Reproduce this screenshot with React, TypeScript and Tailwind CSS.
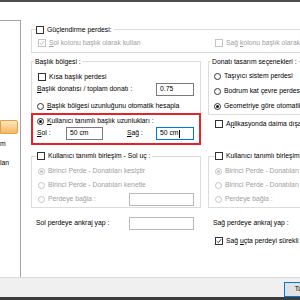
import clsx from 'clsx';
import type { ReactNode } from 'react';

function Check({ checked = false, disabled = false }: { checked?: boolean; disabled?: boolean }) {
  return (
    <span
      className={clsx(
        'flex h-[8px] w-[8px] shrink-0 items-center justify-center border bg-white',
        disabled ? 'border-[#c4c4c4]' : 'border-[#333333]'
      )}
    >
      {checked && (
        <svg viewBox="0 0 6 6" className="h-[6px] w-[6px]">
          <path d="M0.7 3.1 2.3 4.7 5.3 1.1" fill="none" stroke={disabled ? '#b8b8b8' : '#333333'} strokeWidth="0.9" />
        </svg>
      )}
    </span>
  );
}

function Radio({ checked = false, disabled = false }: { checked?: boolean; disabled?: boolean }) {
  return (
    <span
      className={clsx(
        'flex h-[7px] w-[7px] shrink-0 items-center justify-center rounded-full border bg-white',
        disabled ? 'border-[#c4c4c4]' : 'border-[#333333]'
      )}
    >
      {checked && <span className={clsx('h-[3px] w-[3px] rounded-full', disabled ? 'bg-[#c4c4c4]' : 'bg-[#111111]')} />}
    </span>
  );
}

function Field({ value = '', width, focused, disabled }: { value?: string; width: string; focused?: boolean; disabled?: boolean }) {
  return (
    <div
      className={clsx(
        'flex h-[13px] shrink-0 items-center border bg-white pl-[3px]',
        width,
        focused ? 'border-[#0078d7]' : disabled ? 'border-[#b9b9b9]' : 'border-[#7a7a7a]'
      )}
    >
      {value}
      {focused && <span className="ml-[0.5px] h-[8px] w-[1px] bg-black" />}
    </div>
  );
}

// checkbox / radio with its caption
function Opt({ children, className, muted }: { children: ReactNode; className?: string; muted?: boolean }) {
  return <div className={clsx('flex items-center gap-[3px] whitespace-nowrap', muted && 'text-[#a0a0a0]', className)}>{children}</div>;
}

function U({ children }: { children: ReactNode }) {
  return <span className="underline decoration-[0.6px] underline-offset-[1px]">{children}</span>;
}

function JoinGroup({ side }: { side: 'Sol' | 'Sağ' }) {
  return (
    <div className="mt-[11px] border border-[#dcdcdc] pb-[1px]">
      <Opt className={clsx('-mt-[5px] h-[8px] w-fit bg-white pr-[2px]', side === 'Sol' ? 'ml-[5px]' : 'ml-[6px]')}>
        <Check />
        <span>Kullanıcı tanımlı birleşim - {side} uç :</span>
      </Opt>
      <div className="mt-[4px] flex flex-col pl-[6px]">
        <Opt muted className="h-[14px]">
          <Radio checked disabled />
          <span>Birinci Perde - Donatıları kesiştir</span>
        </Opt>
        <Opt muted className="h-[14px]">
          <Radio disabled />
          <span>Birinci Perde - Donatıları kenetle</span>
        </Opt>
        <div className="flex h-[14px] items-center justify-between pr-[6px]">
          <Opt muted>
            <Radio disabled />
            <span>Perdeye bağla :</span>
          </Opt>
          <Field width="w-[65px]" disabled />
        </div>
      </div>
    </div>
  );
}

export default function App() {
  return (
    <div className="flex h-[300px] w-[300px] flex-col overflow-hidden bg-white font-['Liberation_Sans',Arial,sans-serif] text-[6.8px] leading-none text-black">
      <div className="h-[2px] shrink-0 bg-[#4d4d4d]" />

      <div className="flex h-[275px] shrink-0 overflow-hidden">
        {/* tree list on the left, scrolled sideways */}
        <aside className="mt-[18px] w-[21px] shrink-0 overflow-hidden border-t border-r border-[#a3a3a3]">
          <div className="mt-[99px] h-[14px] w-[18px] rounded-r-[2px] border border-[#e3a04a] bg-gradient-to-b from-[#fde6bd] to-[#f6b860]" />
          <div className="mt-[3px] flex h-[14px] items-center">m</div>
          <div className="mt-[5px] flex h-[14px] items-center">lan</div>
        </aside>

        <main className="flex w-[400px] shrink-0 flex-col pl-[10px]">
          <div className="mt-[27px] w-[347px] border border-[#dcdcdc] pb-[5px]">
            <Opt className="-mt-[4px] ml-[4px] h-[8px] w-fit bg-white pr-[2px]">
              <Check />
              <span>Güçlendirme perdesi:</span>
            </Opt>
            <div className="mt-[5px] flex h-[8px]">
              <Opt muted className="w-[168px] pl-[6px]">
                <Check checked disabled />
                <span>
                  <U>S</U>ol kolonu başlık olarak kullan
                </span>
              </Opt>
              <Opt muted className="pl-[15px]">
                <Check disabled />
                <span>
                  Sağ <U>k</U>olonu başlık olarak kullan
                </span>
              </Opt>
            </div>
          </div>

          <div className="mt-[8px] flex gap-[7px]">
            {/* left column */}
            <div className="flex w-[170px] shrink-0 flex-col">
              <div className="border border-[#dcdcdc]">
                <div className="-mt-[4px] ml-[2px] flex h-[8px] w-fit items-center bg-white px-[1px]">Başlık bölgesi :</div>
                <Opt className="mt-[7px] h-[8px] pl-[6px]">
                  <Check />
                  <span>Kısa başlık perdesi</span>
                </Opt>
                <div className="mt-[2px] flex h-[13px] items-center justify-between pl-[5px] pr-[6px]">
                  <span>
                    <U>B</U>aşlık donatısı / toplam donatı :
                  </span>
                  <Field value="0.75" width="w-[38px]" />
                </div>
                <Opt className="mt-[6px] h-[8px] pl-[5px]">
                  <Radio />
                  <span>
                    <U>B</U>aşlık bölgesi uzunluğunu otomatik hesapla
                  </span>
                </Opt>
                <div className="-mx-[1px] mt-[3px] -mb-[1px] border-2 border-[#e3242b] pb-[3px]">
                  <Opt className="mt-[2px] h-[8px] pl-[4px]">
                    <Radio checked />
                    <span>
                      <U>K</U>ullanıcı tanımlı başlık uzunlukları :
                    </span>
                  </Opt>
                  <div className="mt-[2px] flex h-[13px] items-center pl-[4px]">
                    <span className="w-[29px]">
                      <U>S</U>ol :
                    </span>
                    <Field value="50 cm" width="w-[37px]" />
                    <span className="ml-[24px] w-[29px]">
                      <U>S</U>ağ :
                    </span>
                    <Field value="50 cm" width="w-[38px]" focused />
                  </div>
                </div>
              </div>

              <JoinGroup side="Sol" />

              <div className="mt-[9px] flex h-[13px] items-center justify-between pl-[5px] pr-[7px]">
                <span>Sol perdeye ankraj yap :</span>
                <Field width="w-[65px]" disabled />
              </div>
            </div>

            {/* right column */}
            <div className="flex w-[170px] shrink-0 flex-col">
              <div className="border border-[#dcdcdc]">
                <div className="-mt-[4px] ml-[2px] flex h-[8px] w-fit items-center bg-white px-[1px]">Donatı tasarım seçenekleri :</div>
                <div className="mt-[3px] flex flex-col pl-[5px]">
                  <Opt className="h-[15px]">
                    <Radio />
                    <span>Taşıyıcı sistem perdesi</span>
                  </Opt>
                  <Opt className="h-[15px]">
                    <Radio />
                    <span>Bodrum kat çevre perdesi</span>
                  </Opt>
                  <Opt className="h-[15px]">
                    <Radio checked />
                    <span>Geometriye göre otomatik belirle</span>
                  </Opt>
                </div>
              </div>
              <Opt className="mt-[5px] h-[8px] pl-[7px]">
                <Check />
                <span>
                  A<U>p</U>likasyonda daima dışarıda göster
                </span>
              </Opt>

              <div className="-mt-[11px] pt-[28px]">
                <JoinGroup side="Sağ" />
              </div>

              <div className="mt-[9px] flex h-[13px] items-center pl-[5px]">Sağ perdeye ankraj yap :</div>
              <Opt className="mt-[7px] h-[8px] pl-[7px]">
                <Check checked />
                <span>
                  Sağ <U>u</U>çta perdeyi sürekli kabul et
                </span>
              </Opt>
            </div>
          </div>
        </main>
      </div>

      <div className="h-[1px] shrink-0 bg-[#dadada]" />
      <div className="flex h-[19px] shrink-0 justify-end overflow-hidden bg-[#f0f0f0] pt-[4px]">
        <button className="-mr-[28px] h-[15px] w-[44px] shrink-0 border border-[#0078d7] bg-[#e1e1e1] text-center">Tamam</button>
      </div>
      <div className="h-[3px] shrink-0 bg-[#3c3c3c]" />
    </div>
  );
}
